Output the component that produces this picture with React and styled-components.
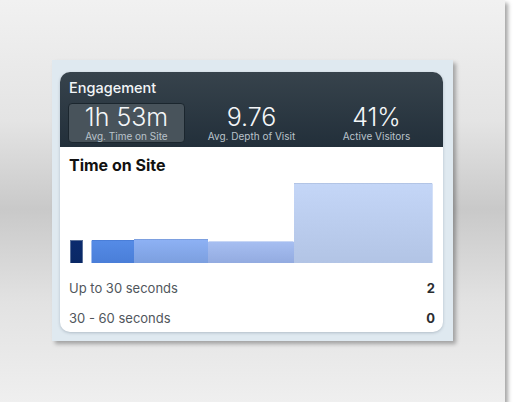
import React from "react";
import styled, { createGlobalStyle } from "styled-components";

const Global = createGlobalStyle`
  html, body { margin: 0; padding: 0; background: #ffffff; }
  body { font-family: Inter, "Noto Sans", sans-serif; }
`;

const Frame = styled.div`
  width: 505px;
  height: 402px;
  box-sizing: border-box;
  padding: 60px 0 0 52px;
  background: linear-gradient(180deg, #f1f1f1 0%, #e4e4e4 30%, #c9c9c9 52%, #e2e2e2 75%, #efefef 100%);
  box-shadow: 3px 3px 4px rgba(0, 0, 0, 0.35);
`;

const Panel = styled.div`
  width: 401px;
  height: 281px;
  box-sizing: border-box;
  padding: 12px 10px 9px 8px;
  background: #dfe9f0;
  box-shadow: 3px 3px 4px rgba(0, 0, 0, 0.3);
`;

const Card = styled.div`
  height: 100%;
  border-radius: 10px;
  overflow: hidden;
  background: #ffffff;
  display: flex;
  flex-direction: column;
  box-shadow: 0 1px 3px rgba(40, 60, 80, 0.25);
`;

const Header = styled.div`
  background: linear-gradient(180deg, #37434c 0%, #222f3a 100%);
  padding: 7px 8px 4px 8px;
  display: flex;
  flex-direction: column;
`;

const Title = styled.div`
  color: #f2f5f7;
  font-size: 14.5px;
  font-weight: 500;
  line-height: 18px;
  padding-left: 1px;
  margin-bottom: 6px;
`;

const Stats = styled.div`
  display: grid;
  grid-template-columns: repeat(3, 1fr);
  gap: 8px;
`;

const Stat = styled.div`
  height: 40px;
  box-sizing: border-box;
  border-radius: 4px;
  border: 1px solid ${(p) => (p.$active ? "#1b262e" : "transparent")};
  background: ${(p) => (p.$active ? "#48535b" : "transparent")};
  display: flex;
  flex-direction: column;
  align-items: center;
  justify-content: center;
`;

const Value = styled.div`
  color: #f4f6f8;
  font-size: 25px;
  font-weight: 300;
  line-height: 25px;
  margin-top: 1px;
`;

const Label = styled.div`
  color: #bac3cb;
  font-size: 10px;
  line-height: 12px;
`;

const Body = styled.div`
  padding: 8px 8px 0 9px;
  display: flex;
  flex-direction: column;
`;

const ChartTitle = styled.div`
  font-size: 16px;
  font-weight: 700;
  color: #111;
  line-height: 20px;
`;

const Chart = styled.div`
  height: 80px;
  margin-top: 8px;
  padding-left: 1px;
  display: flex;
  align-items: flex-end;
`;

const Bar = styled.div`
  box-sizing: border-box;
  flex: none;
  margin-left: ${(p) => p.$gap || 0}px;
  background: linear-gradient(180deg, ${(p) => p.$top} 0%, ${(p) => p.$bottom} 100%);
  border-left: 1px solid ${(p) => p.$edge || "transparent"};
  border-top: 1px solid ${(p) => p.$edgeTop || "transparent"};
  border-right: 1px solid ${(p) => p.$edgeRight || "transparent"};
`;

const Rows = styled.div`
  margin-top: 10px;
  display: flex;
  flex-direction: column;
`;

const Row = styled.div`
  height: 30px;
  display: flex;
  align-items: center;
  justify-content: space-between;
  font-size: 13px;
`;

const RowLabel = styled.span`
  color: #50565c;
`;

const RowValue = styled.span`
  color: #2a2d30;
  font-weight: 700;
`;

const bars = [
  { w: 13, h: 23, top: "#0b2b6e", bottom: "#0a2865", edge: "#5a7099", edgeTop: "#5a7099", edgeRight: "#5a7099" },
  { w: 43, h: 23, gap: 8, top: "#558be6", bottom: "#4a7ed8", edge: "#9fbdf0" },
  { w: 74, h: 24, top: "#8db1f4", bottom: "#7c9fdf" },
  { w: 86, h: 22, top: "#a6bef1", bottom: "#93abe0", edgeTop: "#c7d6f5" },
  { w: 139, h: 80, top: "#c4d6f7", bottom: "#b2c4e5", edgeRight: "#d3e0f8" },
];

export default function App() {
  return (
    <>
      <Global />
      <Frame>
        <Panel>
          <Card>
            <Header>
              <Title>Engagement</Title>
              <Stats>
                <Stat $active>
                  <Value>1h 53m</Value>
                  <Label>Avg. Time on Site</Label>
                </Stat>
                <Stat>
                  <Value>9.76</Value>
                  <Label>Avg. Depth of Visit</Label>
                </Stat>
                <Stat>
                  <Value>41%</Value>
                  <Label>Active Visitors</Label>
                </Stat>
              </Stats>
            </Header>
            <Body>
              <ChartTitle>Time on Site</ChartTitle>
              <Chart>
                {bars.map((b, i) => (
                  <Bar
                    key={i}
                    $gap={b.gap}
                    $top={b.top}
                    $bottom={b.bottom}
                    $edge={b.edge}
                    $edgeTop={b.edgeTop}
                    $edgeRight={b.edgeRight}
                    style={{ width: b.w, height: b.h }}
                  />
                ))}
              </Chart>
              <Rows>
                <Row>
                  <RowLabel>Up to 30 seconds</RowLabel>
                  <RowValue>2</RowValue>
                </Row>
                <Row>
                  <RowLabel>30 - 60 seconds</RowLabel>
                  <RowValue>0</RowValue>
                </Row>
              </Rows>
            </Body>
          </Card>
        </Panel>
      </Frame>
    </>
  );
}
